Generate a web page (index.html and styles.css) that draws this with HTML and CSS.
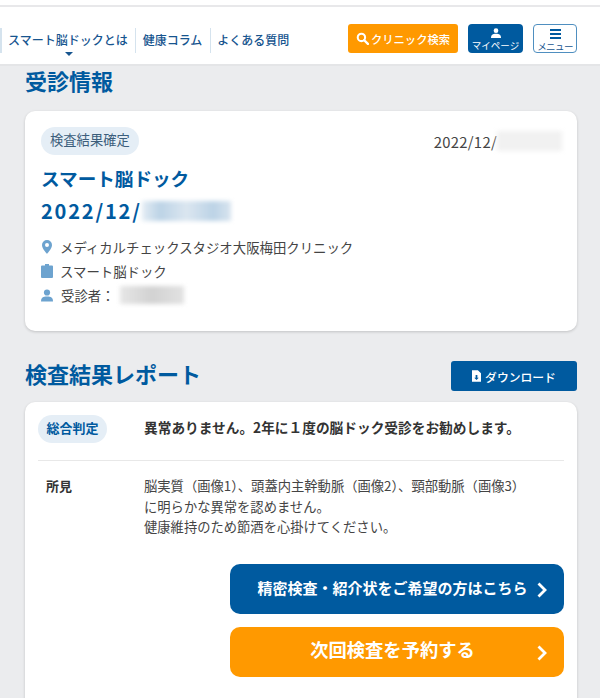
FILE: index.html
```html
<!DOCTYPE html>
<html lang="ja">
  <head>
    <meta charset="UTF-8" />
    <meta name="viewport" content="width=device-width, initial-scale=1.0" />
    <title>受診情報</title>
    <link rel="stylesheet" href="styles.css">
  </head>
  <body>
    <header class="header">
      <nav class="nav">
        <a class="nav-item nav-current">スマート脳ドックとは</a>
        <a class="nav-item">健康コラム</a>
        <a class="nav-item">よくある質問</a>
      </nav>
      <div class="header-btns">
        <a class="btn-search">
          <svg class="icon-search" viewBox="0 0 12 12"><circle cx="5" cy="5" r="3.4" fill="none" stroke="#fff" stroke-width="1.9"/><path d="M7.6 7.6 11 11" stroke="#fff" stroke-width="2.2" stroke-linecap="round"/></svg>
          クリニック検索
        </a>
        <a class="btn-mypage">
          <svg class="icon-top" viewBox="0 0 12 12"><circle cx="6" cy="3.2" r="2.8" fill="#fff"/><path d="M0 12c0-4 2-5.2 6-5.2s6 1.200 6 5.200z" fill="#fff"/></svg>
          <span>マイページ</span>
        </a>
        <a class="btn-menu">
          <span class="bars"><i></i><i></i><i></i></span>
          <span>メニュー</span>
        </a>
      </div>
    </header>

    <main class="main">
      <h2 class="section-title first">受診情報</h2>
      <section class="card info-card">
        <div class="info-top">
          <span class="badge">検査結果確定</span>
          <span class="date">2022/12/<span class="mask date-mask"></span></span>
        </div>
        <h3 class="exam-name">スマート脳ドック</h3>
        <p class="exam-date">2022/12/<span class="mask exam-mask"></span></p>
        <ul class="info-list">
          <li>
            <svg class="info-icon" viewBox="0 0 12 14"><path fill-rule="evenodd" d="M6 0a5 5 0 0 1 5 5c0 3.300-3.400 6.800-5 9-1.600-2.200-5-5.700-5-9a5 5 0 0 1 5-5zm0 3a2 2 0 1 0 0 4 2 2 0 0 0 0-4z"/></svg>
            メディカルチェックスタジオ大阪梅田クリニック
          </li>
          <li>
            <svg class="info-icon" viewBox="0 0 12 14"><path d="M4 0h4v1.500h3a1 1 0 0 1 1 1V13a1 1 0 0 1-1 1H1a1 1 0 0 1-1-1V2.500a1 1 0 0 1 1-1h3z"/></svg>
            スマート脳ドック
          </li>
          <li>
            <svg class="info-icon" viewBox="0 0 12 14"><circle cx="6" cy="4.500" r="3.100"/><path d="M0 13.500c0-4 2-5 6-5s6 1 6 5z"/></svg>
            <span class="person">受診者：</span><span class="mask person-mask"></span>
          </li>
        </ul>
      </section>

      <div class="report-head">
        <h2 class="section-title">検査結果レポート</h2>
        <a class="btn-download">
          <svg class="icon-file" viewBox="0 0 10 13"><path fill-rule="evenodd" d="M0 0h6.500L10 3.500V13H0zM4 5.500v3H2.500L5 11l2.500-2.500H6v-3z"/></svg>
          ダウンロード
        </a>
      </div>

      <section class="card report-card">
        <div class="judge">
          <span class="badge badge-bold">総合判定</span>
          <p class="judge-text">異常ありません。2年に１度の脳ドック受診をお勧めします。</p>
        </div>
        <div class="finding">
          <span class="finding-label">所見</span>
          <p class="finding-text">脳実質（画像1）、頭蓋内主幹動脈（画像2）、頸部動脈（画像3）<br>に明らかな異常を認めません。<br>健康維持のため節酒を心掛けてください。</p>
        </div>
        <div class="actions">
          <a class="action action-blue">
            <span class="action-label">精密検査・紹介状をご希望の方はこちら</span>
            <svg class="chevron" viewBox="0 0 10 16"><path d="M1.500 1.500 8 8l-6.500 6.500" fill="none" stroke="#fff" stroke-width="2.800"/></svg>
          </a>
          <a class="action action-orange">
            <span class="action-label">次回検査を予約する</span>
            <svg class="chevron" viewBox="0 0 10 16"><path d="M1.500 1.500 8 8l-6.500 6.500" fill="none" stroke="#fff" stroke-width="2.800"/></svg>
          </a>
        </div>
      </section>
    </main>
  </body>
</html>
```

FILE: styles.css
```css
html,
body {
  height: 698px;
  overflow: hidden;
}

body {
  margin: 0;
  background-color: #ebecee;
  font-family: "Noto Sans CJK JP", "Noto Sans", sans-serif;
  color: #333;
}

h2,
h3,
p,
ul {
  margin: 0;
  padding: 0;
}

/* header */
.header {
  position: relative;
  display: flex;
  justify-content: space-between;
  height: 57px;
  padding-right: 23px;
  background: #fff;
  border-top: 7px solid #fff;
  border-bottom: 2px solid #e4e5e7;
}

.header::before {
  content: "";
  position: absolute;
  left: 0;
  right: 0;
  top: -2px;
  height: 2px;
  background: #e8e8ea;
}

.nav {
  display: flex;
  align-items: center;
  padding-top: 10px;
}

.nav-item {
  position: relative;
  display: block;
  padding: 0 8px 2px 7px;
  border-left: 1px solid #d5e3ee;
  color: #17558f;
  font-size: 12px;
  font-weight: 500;
  line-height: 23px;
  white-space: nowrap;
}

.nav-item:first-child {
  border-left: 2px solid #d5e3ee;
  padding-left: 6px;
  padding-right: 7px;
}

.nav-item:nth-child(3) {
  padding-left: 6px;
}

.nav-current::after {
  content: "";
  position: absolute;
  left: 50%;
  bottom: -3px;
  margin-left: -3px;
  border: 4px solid transparent;
  border-top: 4px solid #17558f;
  border-bottom: 0;
}

.header-btns {
  display: flex;
  align-items: flex-start;
  padding-top: 17px;
}

.btn-search {
  display: flex;
  align-items: center;
  justify-content: center;
  width: 110px;
  height: 29px;
  border-radius: 3px;
  background: #ff9900;
  color: #fff;
  font-size: 11.300px;
  font-weight: 500;
  white-space: nowrap;
}

.icon-search {
  width: 13px;
  height: 13px;
  margin-right: 2px;
}

.btn-mypage,
.btn-menu {
  display: flex;
  flex-direction: column;
  align-items: center;
  height: 29px;
  border-radius: 4px;
  box-sizing: border-box;
  font-size: 9.500px;
  line-height: 11px;
  white-space: nowrap;
}

.btn-mypage {
  width: 55px;
  margin-left: 10px;
  padding-top: 4px;
  background: #005a9f;
  color: #fff;
}

.icon-top {
  width: 10px;
  height: 10px;
  margin-bottom: 2px;
}

.btn-menu {
  width: 44px;
  margin-left: 10px;
  padding-top: 4px;
  border: 1px solid #4f8fc0;
  background: #fff;
  color: #17558f;
  letter-spacing: -0.600px;
}

.bars {
  display: block;
  width: 11px;
}

.bars i {
  display: block;
  height: 2px;
  margin-bottom: 2px;
  background: #005a9f;
}

/* main */
.main {
  padding: 0 23px 0 25px;
}

.section-title {
  color: #005a9f;
  font-size: 22px;
  font-weight: 700;
  line-height: 30px;
}

.section-title.first {
  line-height: 28px;
  margin-bottom: 17px;
}

.card {
  background: #fff;
  border-radius: 10px;
  box-shadow: 0 1px 3px rgba(0, 0, 0, 0.18);
}

.info-card {
  height: 220px;
  box-sizing: border-box;
  padding: 16px 15px 0 16px;
}

.info-top {
  display: flex;
  align-items: center;
  justify-content: space-between;
}

.badge {
  display: inline-block;
  height: 28px;
  padding: 0 9px;
  border-radius: 14px;
  background: #e5eef6;
  color: #3c5e7c;
  font-size: 13.300px;
  line-height: 26px;
}

.date {
  display: flex;
  align-items: center;
  color: #444;
  font-size: 14.800px;
  letter-spacing: 0.300px;
}

.mask {
  display: inline-block;
  filter: blur(2px);
}

.date-mask {
  width: 65px;
  height: 20px;
  background: #f1f1f1;
}

.exam-name {
  margin-top: 8px;
  color: #005a9f;
  font-size: 18.600px;
  font-weight: 700;
  line-height: 30px;
}

.exam-date {
  display: flex;
  align-items: center;
  margin-top: 3px;
  color: #005a9f;
  font-size: 20px;
  font-weight: 700;
  letter-spacing: 1.800px;
  line-height: 30px;
}

.exam-mask {
  width: 89px;
  height: 20px;
  background: linear-gradient(90deg, #e4edf4, #bcd3e6 20%, #dbe6f0 50%, #bcd3e6 80%, #d8e4ef);
}

.info-list {
  margin-top: 9px;
  list-style: none;
  font-size: 13.400px;
  color: #444;
}

.info-list li {
  display: flex;
  align-items: center;
  height: 24px;
  white-space: nowrap;
}

.info-icon {
  flex: none;
  width: 12px;
  height: 14px;
  margin-right: 7px;
  fill: #6da3cf;
}

.person {
  margin-left: 1px;
  margin-right: 5px;
}

.person-mask {
  width: 64px;
  height: 18px;
  background: linear-gradient(90deg, #e6e6e6, #d2d2d2 50%, #e2e2e2);
}

.report-head {
  display: flex;
  align-items: flex-start;
  justify-content: space-between;
  margin-top: 30px;
  margin-bottom: 11px;
}

.report-head .section-title {
  line-height: 24px;
}

.btn-download {
  display: flex;
  align-items: center;
  justify-content: center;
  width: 126px;
  height: 30px;
  border-radius: 3px;
  background: #005a9f;
  color: #fff;
  font-size: 11.800px;
  font-weight: 500;
}

.icon-file {
  width: 9px;
  height: 12px;
  margin-right: 4px;
  fill: #fff;
}

.report-card {
  height: 340px;
  padding: 13px 13px 0;
}

.judge {
  display: flex;
  align-items: center;
  padding-bottom: 17px;
  border-bottom: 1px solid #e8e8e8;
}

.badge-bold {
  flex: none;
  width: 69px;
  box-sizing: border-box;
  padding: 0;
  text-align: center;
  color: #005a9f;
  font-size: 13px;
  font-weight: 700;
}

.judge-text {
  margin-left: 37px;
  margin-bottom: 4px;
  font-size: 13.700px;
  font-weight: 700;
  white-space: nowrap;
}

.finding {
  display: flex;
  margin-top: 15px;
  font-size: 13.300px;
  line-height: 20.500px;
}

.finding-label {
  flex: none;
  width: 106px;
  box-sizing: border-box;
  padding-left: 8px;
  font-size: 13px;
  font-weight: 700;
}

.finding-text {
  color: #444;
  white-space: nowrap;
}

.actions {
  display: flex;
  flex-direction: column;
  gap: 13px;
  margin-top: 26px;
  margin-left: 192px;
}

.action {
  position: relative;
  display: flex;
  align-items: center;
  justify-content: center;
  height: 50px;
  border-radius: 10px;
  color: #fff;
  font-weight: 700;
  white-space: nowrap;
}

.action-blue {
  background: #005a9f;
  font-size: 15px;
}

.action-blue .action-label {
  margin: 0 0 2px -9px;
}

.action-orange {
  background: #ff9900;
  font-size: 18.300px;
}

.action-orange .action-label {
  margin: 0 0 5px -9px;
}

.chevron {
  position: absolute;
  right: 17px;
  top: 18px;
  width: 10px;
  height: 16px;
}
```
